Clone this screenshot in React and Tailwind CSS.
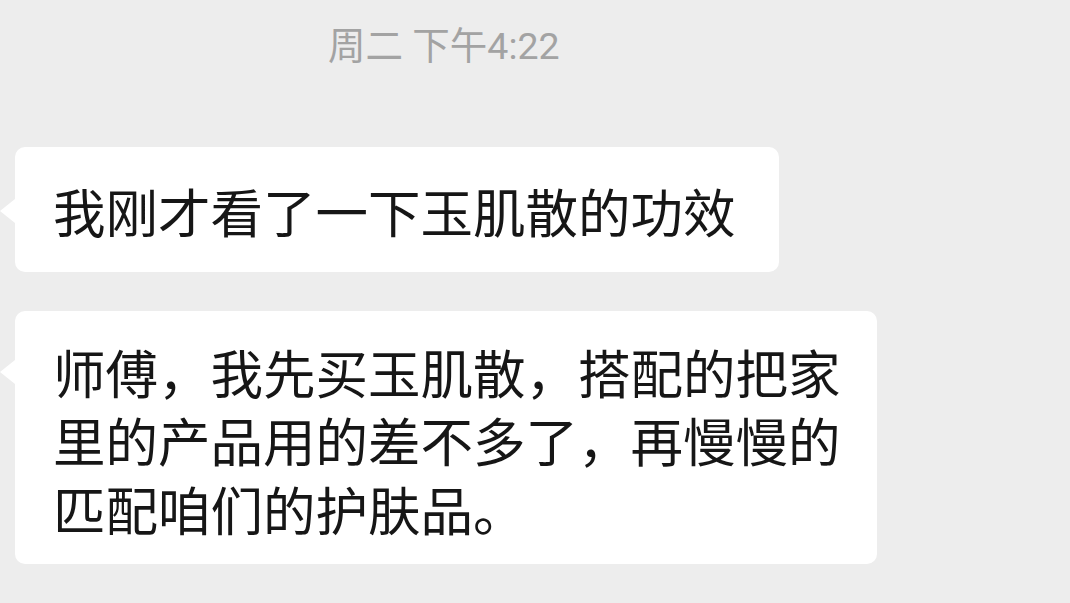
import React from "react";

const font = { fontFamily: '"Noto Sans CJK SC", "Noto Sans", sans-serif' };

const Bubble = ({ children, className, tailTop }) => {
  return (
    <div className="relative ml-[15px] w-fit">
      <div
        className={`absolute left-[-15px] w-0 h-0 border-y-[12px] border-y-transparent border-r-[15px] border-r-white ${tailTop}`}
      />
      <div className={`bg-white rounded-[10px] text-[#161616] ${className}`}>
        {children}
      </div>
    </div>
  );
};

export default function App() {
  return (
    <div
      className="w-full h-[603px] bg-[#ededed] flex flex-col overflow-hidden"
      style={font}
    >
      <div
        className="pl-[328px] pt-[22px] text-[37.5px] leading-[48px] text-[#a3a3a3]"
        style={{ fontFamily: 'Roboto, "Noto Sans CJK SC", sans-serif' }}
      >
        周二 下午4:22
      </div>

      <div className="mt-[77px]">
        <Bubble
          tailTop="top-[52px]"
          className="pl-[38px] pr-[43px] pt-[29px] pb-[27px] text-[52.5px] leading-[68.5px] whitespace-nowrap"
        >
          我刚才看了一下玉肌散的功效
        </Bubble>
      </div>

      <div className="mt-[39px]">
        <Bubble
          tailTop="top-[49px]"
          className="w-[862px] pl-[38px] pr-[34px] pt-[26px] pb-[22px] text-[52.5px] leading-[68.5px]"
        >
          师傅，我先买玉肌散，搭配的把家
          <br />
          里的产品用的差不多了，再慢慢的
          <br />
          匹配咱们的护肤品。
        </Bubble>
      </div>
    </div>
  );
}
